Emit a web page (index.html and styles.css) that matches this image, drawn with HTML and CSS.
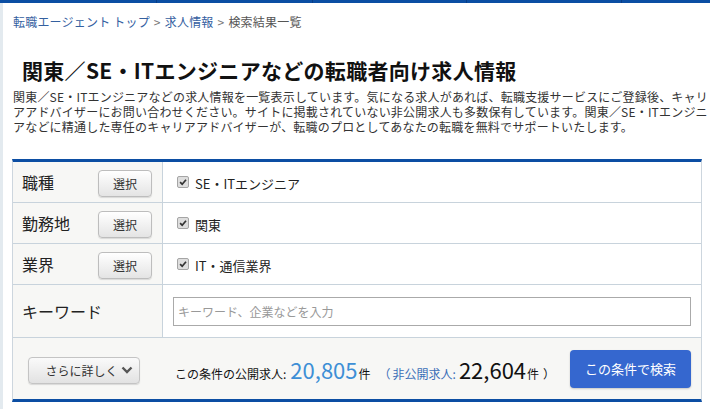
FILE: index.html
```html
<!DOCTYPE html>
<html lang="ja">
<head>
<meta charset="utf-8">
<title>検索結果一覧</title>
<link rel="stylesheet" href="styles.css">
</head>
<body>
<div class="topbar">
  <span class="seg s1"></span><span class="seg s2"></span><span class="seg s3"></span><span class="seg s4"></span><span class="seg s5"></span>
</div>
<div class="page">
  <nav class="crumbs">
    <a href="#">転職エージェント トップ</a><span class="sep">&gt;</span><a href="#">求人情報</a><span class="sep">&gt;</span><span class="current">検索結果一覧</span>
  </nav>
  <h1 class="title">関東／SE・ITエンジニアなどの転職者向け求人情報</h1>
  <p class="lead">関東／SE・ITエンジニアなどの求人情報を一覧表示しています。気になる求人があれば、転職支援サービスにご登録後、キャリ<br>アアドバイザーにお問い合わせください。サイトに掲載されていない非公開求人も多数保有しています。関東／SE・ITエンジニ<br>アなどに精通した専任のキャリアアドバイザーが、転職のプロとしてあなたの転職を無料でサポートいたします。</p>

  <div class="search">
    <div class="row">
      <div class="label"><span class="ltext">職種</span><button class="sel">選択</button></div>
      <div class="value"><span class="cb"><svg viewBox="0 0 12 12" width="12" height="12"><path d="M2.5 6.2 L5 8.6 L9.6 3.2" fill="none" stroke="#333" stroke-width="2"/></svg></span><span class="vtext">SE・ITエンジニア</span></div>
    </div>
    <div class="row">
      <div class="label"><span class="ltext">勤務地</span><button class="sel">選択</button></div>
      <div class="value"><span class="cb"><svg viewBox="0 0 12 12" width="12" height="12"><path d="M2.5 6.2 L5 8.6 L9.6 3.2" fill="none" stroke="#333" stroke-width="2"/></svg></span><span class="vtext">関東</span></div>
    </div>
    <div class="row">
      <div class="label"><span class="ltext">業界</span><button class="sel">選択</button></div>
      <div class="value"><span class="cb"><svg viewBox="0 0 12 12" width="12" height="12"><path d="M2.5 6.2 L5 8.6 L9.6 3.2" fill="none" stroke="#333" stroke-width="2"/></svg></span><span class="vtext">IT・通信業界</span></div>
    </div>
    <div class="row kw">
      <div class="label"><span class="ltext wide">キーワード</span></div>
      <div class="value"><input class="kwinput" type="text" placeholder="キーワード、企業などを入力"></div>
    </div>
    <div class="foot">
      <button class="more"><span>さらに詳しく</span><svg viewBox="0 0 12 8" width="12" height="8"><path d="M1.5 1.5 L6 6 L10.5 1.5" fill="none" stroke="#555" stroke-width="2.4"/></svg></button>
      <div class="count">
        <span class="clabel">この条件の公開求人:</span>
        <span class="num pub">20,805</span><span class="unit">件</span>
        <span class="paren">（</span><span class="hlabel">非公開求人:</span>
        <span class="num hid">22,604</span><span class="unit">件</span><span class="paren2">）</span>
      </div>
      <button class="go">この条件で検索</button>
    </div>
  </div>
</div>
</body>
</html>
```

FILE: styles.css
```css
* { box-sizing: border-box; }
html, body { margin: 0; padding: 0; }
body {
  background: #fff;
  font-family: "Noto Sans CJK JP", "Noto Sans", sans-serif;
  color: #222;
  width: 710px;
  overflow: hidden;
}
.topbar {
  display: flex;
  height: 3px;
  background: #0b4ea3;
}
.seg { display: block; height: 3px; border-right: 1px solid #083d85; }
.s1 { width: 157px; }
.s2 { width: 156px; }
.s3 { width: 154px; }
.s4 { width: 155px; }
.s5 { flex: 1; border-right: none; }

.page {
  border-left: 3px solid #e3eaef;
  padding: 0 0 7px 9px;
}
.crumbs {
  padding: 11px 0 0 1px;
  font-size: 12px;
  line-height: 16px;
  height: 27px;
  letter-spacing: 0.2px;
}
.crumbs a { color: #34609f; text-decoration: none; }
.crumbs .sep { color: #777; margin: 0 4px; }
.crumbs .current { color: #555; }

.title {
  margin: 26px 0 0 10px;
  font-size: 21px;
  line-height: 28px;
  font-weight: bold;
  color: #111;
  letter-spacing: 0.3px;
}
.lead {
  margin: 4px 0 0 1px;
  width: 697px;
  font-size: 12px;
  letter-spacing: 0.2px;
  line-height: 15px;
  color: #333;
  white-space: nowrap;
  padding-top: 1px;
}

.search {
  margin-top: 25px;
  width: 690px;
  border-top: 3px solid #0c4ea3;
  border-bottom: 3px solid #0c4ea3;
  border-left: 1px solid #cdd6de;
  border-right: 1px solid #cdd6de;
}
.row {
  display: flex;
  height: 41px;
  border-bottom: 1px solid #c8d3dc;
}
.row.kw { height: 53px; }
.label {
  width: 150px;
  flex: none;
  background: #f7f7f5;
  border-right: 1px solid #c8d3dc;
  display: flex;
  align-items: center;
  padding-left: 9px;
}
.ltext {
  width: 76px;
  font-size: 16px;
  color: #222;
  white-space: nowrap;
}
.ltext.wide { width: auto; }
.sel {
  width: 54px;
  height: 27px;
  margin-top: 2px;
  font-family: inherit;
  font-size: 12px;
  color: #333;
  background: linear-gradient(#ffffff, #e4e4e4);
  border: 1px solid #bdbdbd;
  border-radius: 4px;
  box-shadow: 0 1px 1px rgba(0,0,0,0.12);
  padding: 0;
}
.value {
  flex: 1;
  display: flex;
  align-items: center;
  padding-left: 14px;
  background: #fff;
}
.cb {
  width: 12px;
  height: 12px;
  border: 1px solid #a5a5a5;
  border-radius: 2px;
  background: #dedede;
  display: flex;
  align-items: center;
  justify-content: center;
}
.cb svg { display: block; }
.vtext {
  margin-left: 6px;
  font-size: 13px;
  color: #222;
  padding-top: 2px;
}
.row.kw .value { padding: 0 10px 0 10px; }
.kwinput {
  width: 100%;
  height: 29px;
  border: 1px solid #aaa;
  font-family: inherit;
  font-size: 12px;
  padding: 0 4px;
  color: #333;
}
.kwinput::placeholder { color: #999; }

.foot {
  height: 61px;
  background: #f7f7f5;
  display: flex;
  align-items: center;
  padding: 0 10px 0 15px;
}
.more {
  width: 112px;
  height: 27px;
  margin-top: 3px;
  font-family: inherit;
  font-size: 12px;
  color: #333;
  background: linear-gradient(#fafafa, #e2e2e2);
  border: 1px solid #c4c4c4;
  border-radius: 4px;
  box-shadow: 0 1px 1px rgba(0,0,0,0.12);
  display: flex;
  align-items: center;
  justify-content: center;
  white-space: nowrap;
  padding: 0 0 0 10px;
  gap: 3px;
}
.more svg { display: block; }
.count {
  margin-left: 35px;
  display: flex;
  align-items: baseline;
  white-space: nowrap;
}
.clabel { font-size: 12px; color: #111; }
.num { font-size: 22px; margin-left: 4px; }
.pub { color: #3d8fd6; }
.hid { color: #111; margin-left: 3px; }
.unit { font-size: 12px; color: #111; margin-left: 1px; }
.paren { font-size: 12px; color: #3b6fb8; margin-left: 8px; }
.hlabel { font-size: 12px; color: #3b6fb8; margin-left: 2px; }
.paren2 { font-size: 12px; color: #111; margin-left: 4px; }
.go {
  margin-left: auto;
  width: 121px;
  height: 38px;
  font-family: inherit;
  font-size: 13px;
  color: #fff;
  background: #3567cf;
  border: none;
  border-radius: 4px;
  box-shadow: 0 1px 2px rgba(0,0,0,0.2);
  padding: 0;
}
```
